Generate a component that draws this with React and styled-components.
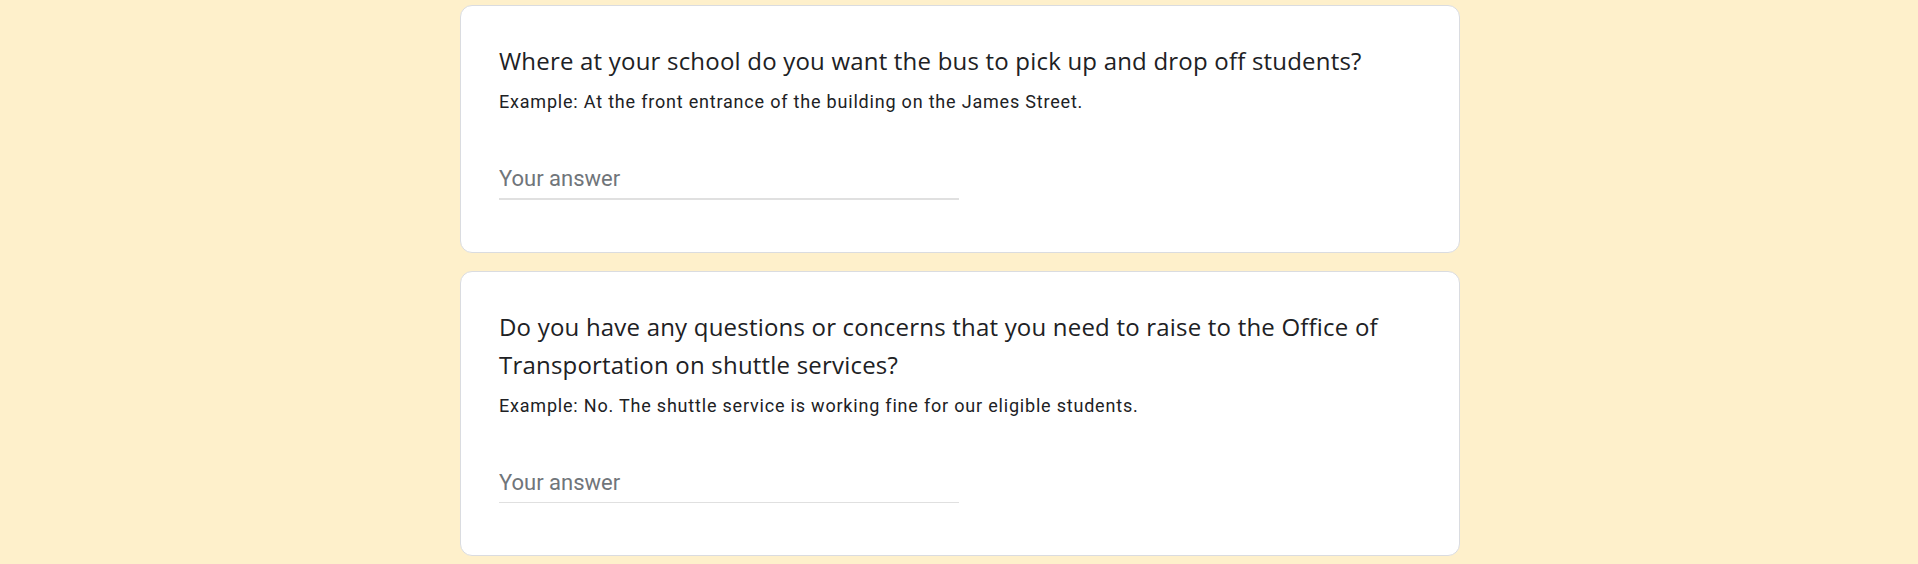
import styled, { createGlobalStyle } from 'styled-components';

const questions = [
  {
    id: 'pickup',
    title: 'Where at your school do you want the bus to pick up and drop off students?',
    help: 'Example: At the front entrance of the building on the James Street.',
    thick: true,
  },
  {
    id: 'concerns',
    title:
      'Do you have any questions or concerns that you need to raise to the Office of Transportation on shuttle services?',
    help: 'Example: No. The shuttle service is working fine for our eligible students.',
    thick: false,
  },
];

function App() {
  return (
    <>
      <GlobalStyle />
      <Page>
        {questions.map((q) => (
          <Card key={q.id}>
            <Title>{q.title}</Title>
            <Help>{q.help}</Help>
            <AnswerField thick={q.thick}>
              <AnswerInput type='text' placeholder='Your answer' />
            </AnswerField>
          </Card>
        ))}
      </Page>
    </>
  );
}

const GlobalStyle = createGlobalStyle`
  html, body {
    margin: 0;
    padding: 0;
    background: #fef0cb;
  }
  * {
    box-sizing: border-box;
  }
`;

const Page = styled.div`
  display: flex;
  flex-direction: column;
  align-items: center;
  gap: 18px;
  padding-top: 5px;
  min-height: 564px;
  background: #fef0cb;
`;

const Card = styled.div`
  width: 1000px;
  margin-left: 2px;
  background: #ffffff;
  border: 1px solid #dadce0;
  border-radius: 12px;
  padding: 36px 40px 52px 38px;
  display: flex;
  flex-direction: column;
`;

const Title = styled.div`
  font-family: 'Open Sans', 'Liberation Sans', sans-serif;
  font-size: 24px;
  line-height: 38px;
  color: #202124;
  letter-spacing: 0.2px;
  max-width: 900px;
`;

const Help = styled.div`
  margin-top: 8px;
  font-family: Roboto, 'Liberation Sans', sans-serif;
  font-size: 18px;
  line-height: 27px;
  letter-spacing: 0.8px;
  color: #202124;
`;

const AnswerField = styled.div`
  margin-top: 47px;
  width: 460px;
  border-bottom: ${(props) => (props.thick ? 2 : 1)}px solid #e0e0e0;
  padding-bottom: 3px;
`;

const AnswerInput = styled.input`
  display: block;
  width: 100%;
  border: none;
  outline: none;
  padding: 0;
  margin: 0;
  background: transparent;
  font-family: Roboto, 'Liberation Sans', sans-serif;
  font-size: 22px;
  line-height: 33px;
  height: 33px;
  color: #202124;

  &::placeholder {
    color: #70757a;
  }
`;

export default App;
